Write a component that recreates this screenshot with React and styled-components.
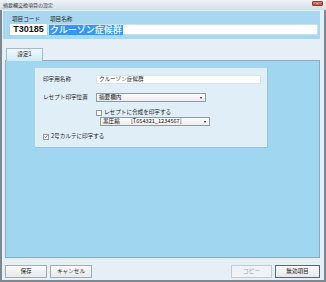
import React from "react";
import styled, { createGlobalStyle } from "styled-components";

const Global = createGlobalStyle`
  html, body { margin: 0; padding: 0; }
  body { width: 326px; height: 282px; overflow: hidden; font-family: "Noto Sans CJK JP", "Liberation Sans", sans-serif; }
  * { box-sizing: border-box; }
`;

const Frame = styled.div`
  width: 326px;
  height: 282px;
  display: flex;
  flex-direction: column;
  background: #7d8892;
`;

const TitleBar = styled.div`
  height: 10px;
  flex: none;
  display: flex;
  align-items: center;
  justify-content: space-between;
  padding: 0 3px 0 3px;
  background: linear-gradient(#eef3f7, #d3dee8);
  font-size: 5px;
  line-height: 10px;
  color: #333;
`;

const CloseBtn = styled.div`
  width: 11px;
  height: 5px;
  margin-top: -3px;
  background: linear-gradient(#e08878, #c0453a);
  border: 1px solid #8c3a32;
  border-radius: 1px;
  display: flex;
  align-items: center;
  justify-content: center;
  color: #fff;
  font-size: 4px;
  line-height: 3px;
  font-family: "Liberation Sans", sans-serif;
`;

const Body = styled.div`
  flex: 1;
  margin: 0 2px 2px 2px;
  background: #e6eff6;
  display: flex;
  flex-direction: column;
`;

const Header = styled.div`
  height: 28px;
  margin: 1px 4px 0 1px;
  padding: 4px 2px 0 7px;
  background: #a8d8f0;
  display: flex;
  gap: 1px;
`;

const Field = styled.div`
  display: flex;
  flex-direction: column;
  width: ${(p) => (p.$grow ? "auto" : p.$w + "px")};
  flex: ${(p) => (p.$grow ? 1 : "none")};
`;

const FieldLabel = styled.div`
  font-size: 5.6px;
  line-height: 8px;
  height: 8px;
  margin-bottom: 1px;
  padding-left: 2px;
  color: #222;
`;

const CodeBox = styled.div`
  height: 11px;
  background: #fff;
  font-family: "Liberation Sans", sans-serif;
  font-weight: bold;
  font-size: 9px;
  line-height: 11px;
  text-align: center;
  color: #111;
`;

const NameBox = styled.div`
  height: 11px;
  background: #fff;
  border: 1px solid #c4e2f2;
  padding-left: 0;
  display: flex;
  align-items: center;
`;

const Selected = styled.span`
  background: #3496f6;
  color: #fff;
  font-size: 9px;
  font-weight: 500;
  line-height: 10px;
  padding: 0 1px;
`;

const TabStrip = styled.div`
  margin-top: 8px;
  height: 13px;
  padding-left: 4px;
  display: flex;
  align-items: flex-end;
`;

const Tab = styled.div`
  width: 37px;
  height: 13px;
  border: 1px solid #9dbdcf;
  border-bottom: none;
  background: linear-gradient(#f4f9fc, #cfe9f6);
  font-size: 5.6px;
  line-height: 11px;
  text-align: center;
  color: #222;
  position: relative;
  z-index: 1;
  margin-bottom: -1px;
`;

const TabPanel = styled.div`
  height: 198px;
  margin: 0 4px 0 3px;
  border: 1px solid #88abc0;
  background: #a0d6f0;
  padding: 7px 0 0 29px;
`;

const Inner = styled.div`
  width: 233px;
  height: 80px;
  background: #dfeef7;
  border-right: 1px solid #93c4dc;
  border-bottom: 1px solid #93c4dc;
  padding: 7px 6px 0 8px;
  display: flex;
  flex-direction: column;
`;

const Row = styled.div`
  display: flex;
  align-items: center;
  height: 9px;
  margin-top: ${(p) => p.$mt || 0}px;
  padding-left: ${(p) => p.$pl || 0}px;
`;

const RowLabel = styled.div`
  width: 53px;
  flex: none;
  font-size: 5.6px;
  line-height: 9px;
  color: #222;
  white-space: nowrap;
`;

const TextInput = styled.div`
  flex: 1;
  height: 9px;
  background: #fff;
  border: 1px solid #d3e4ee;
  font-size: 5.6px;
  line-height: 7px;
  padding-left: 2px;
  color: #222;
`;

const Select = styled.div`
  width: ${(p) => p.$w}px;
  height: 9px;
  background: linear-gradient(#fdfdfd, #ececec);
  border: 1px solid #8e9aa4;
  display: flex;
  align-items: center;
  font-size: 5.6px;
  line-height: 7px;
  color: #111;
  padding-left: 2px;
`;

const SelectText = styled.div`
  flex: 1;
  white-space: pre;
  overflow: hidden;
`;

const Arrow = styled.div`
  width: 0;
  height: 0;
  margin-right: 3px;
  border-left: 1.5px solid transparent;
  border-right: 1.5px solid transparent;
  border-top: 2px solid #111;
`;

const Check = styled.div`
  width: 6px;
  height: 6px;
  flex: none;
  border: 1px solid #8c99a3;
  background: #fff;
  margin-right: 2px;
  display: flex;
  align-items: center;
  justify-content: center;
`;

const CheckText = styled.div`
  font-size: 5.6px;
  line-height: 9px;
  color: #222;
  white-space: nowrap;
`;

const Footer = styled.div`
  flex: 1;
  display: flex;
  align-items: flex-start;
  padding: 7px 4px 0 3px;
  gap: 3px;
`;

const Spacer = styled.div`
  flex: 1;
`;

const Button = styled.div`
  width: ${(p) => p.$w}px;
  height: 13px;
  border: 1px solid ${(p) => (p.$default ? "#5c6770" : p.$disabled ? "#c3cad0" : "#a3acb3")};
  background: ${(p) => (p.$disabled ? "#f0f3f5" : "linear-gradient(#fbfbfb, #e6e8ea)")};
  font-size: 5.6px;
  line-height: 11px;
  text-align: center;
  color: ${(p) => (p.$disabled ? "#9aa2a8" : "#222")};
  margin-left: ${(p) => p.$ml || 0}px;
`;

const CheckMark = () => (
  <svg width="5" height="5" viewBox="0 0 5 5">
    <path d="M0.8 2.6 L2 3.8 L4.3 1" stroke="#333" strokeWidth="0.9" fill="none" />
  </svg>
);

export default function App() {
  return (
    <>
      <Global />
      <Frame>
        <TitleBar>
          <span>摘要欄交換項目の設定</span>
          <CloseBtn>×</CloseBtn>
        </TitleBar>
        <Body>
          <Header>
            <Field $w={37}>
              <FieldLabel>項目コード</FieldLabel>
              <CodeBox>T30185</CodeBox>
            </Field>
            <Field $grow>
              <FieldLabel>項目名称</FieldLabel>
              <NameBox>
                <Selected>クルーゾン症候群</Selected>
              </NameBox>
            </Field>
          </Header>
          <TabStrip>
            <Tab>設定1</Tab>
          </TabStrip>
          <TabPanel>
            <Inner>
              <Row>
                <RowLabel>印字用名称</RowLabel>
                <TextInput>クルーゾン症候群</TextInput>
              </Row>
              <Row $mt={9}>
                <RowLabel>レセプト印字位置</RowLabel>
                <Select $w={110}>
                  <SelectText>摘要欄内</SelectText>
                  <Arrow />
                </Select>
              </Row>
              <Row $mt={6} $pl={53}>
                <Check />
                <CheckText>レセプトに合成を印字する</CheckText>
              </Row>
              <Row $mt={0} $pl={57}>
                <Select $w={110}>
                  <SelectText>{"黒圧縮　　[T654321_1234567]"}</SelectText>
                  <Arrow />
                </Select>
              </Row>
              <Row $mt={6}>
                <Check>
                  <CheckMark />
                </Check>
                <CheckText>2号カルテに印字する</CheckText>
              </Row>
            </Inner>
          </TabPanel>
          <Footer>
            <Button $w={42}>保存</Button>
            <Button $w={42}>キャンセル</Button>
            <Spacer />
            <Button $w={41} $disabled>コピー</Button>
            <Button $w={45} $default>無効項目</Button>
          </Footer>
        </Body>
      </Frame>
    </>
  );
}
